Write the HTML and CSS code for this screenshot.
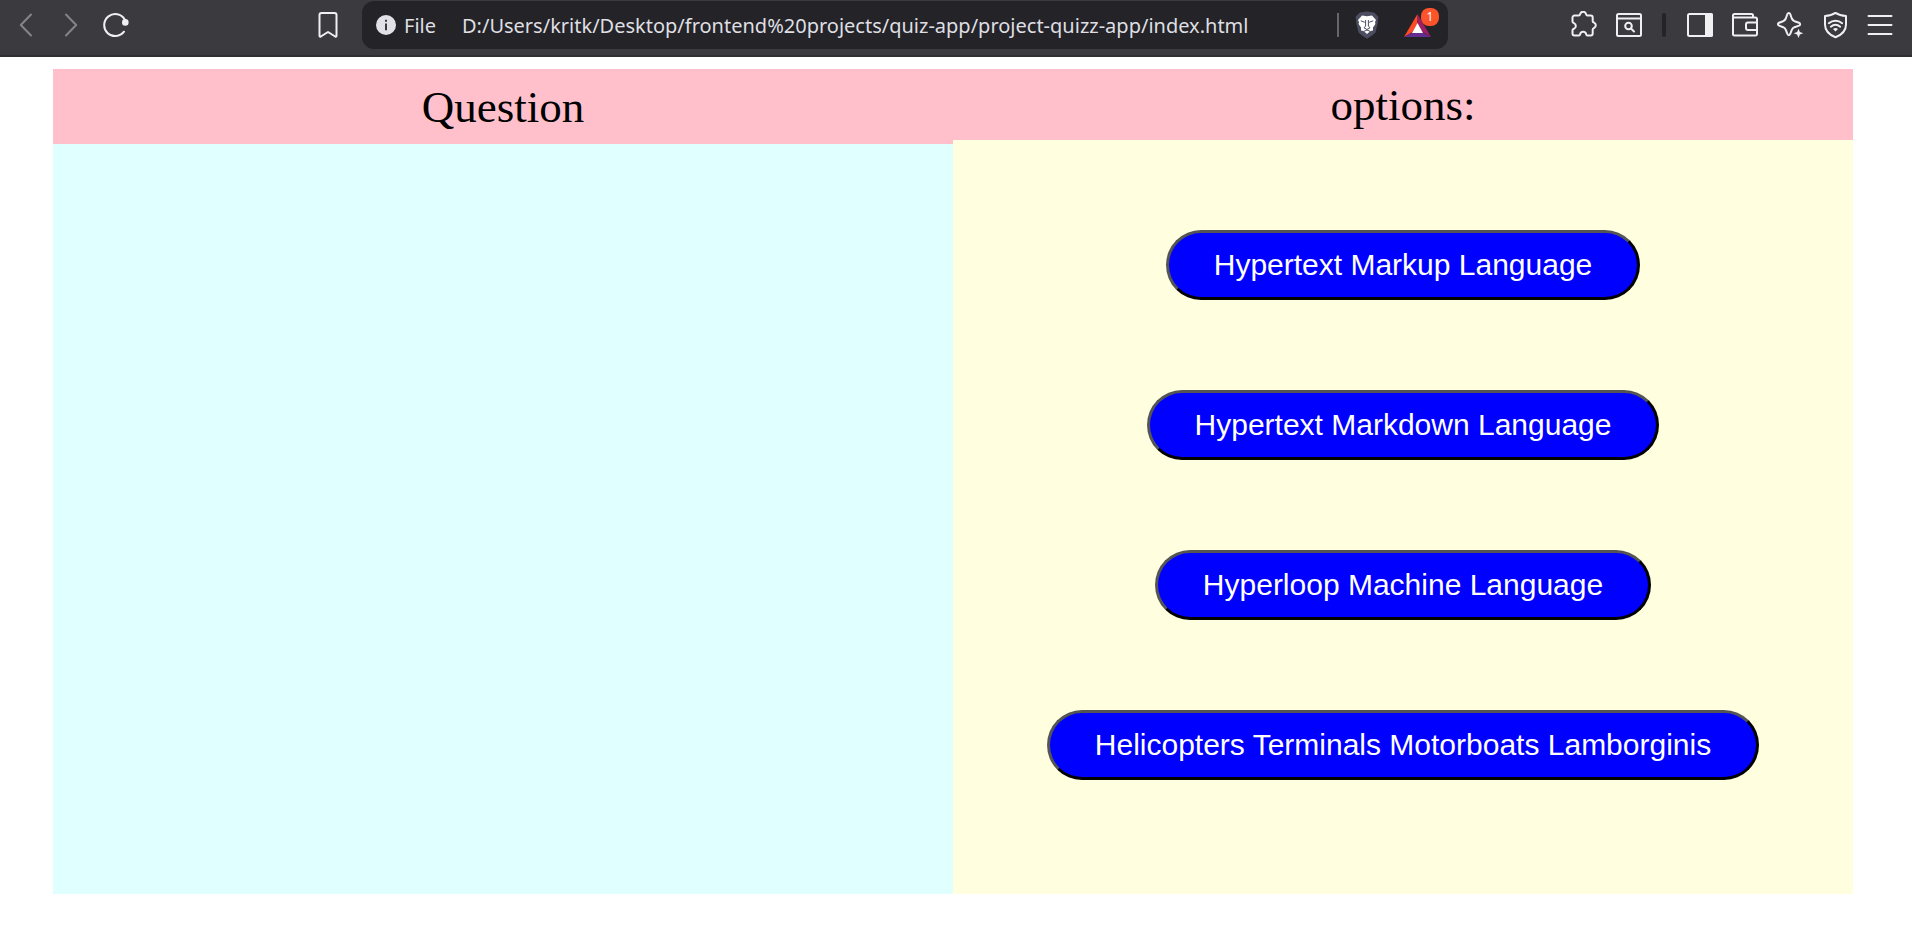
FILE: index.html
```html
<!DOCTYPE html>
<html lang="en">
<head>
<meta charset="utf-8">
<title>Quiz App</title>
<link rel="stylesheet" href="styles.css">
</head>
<body>
<header class="toolbar">
  <button class="tool tool-dim" type="button" aria-label="Back">
    <svg class="icon" viewBox="0 0 27 28"><path d="M18 3.500 7.800 14 18 24.500"/></svg>
  </button>
  <button class="tool tool-dim" type="button" aria-label="Forward">
    <svg class="icon" viewBox="0 0 27 28"><path d="M8 3.500 18.200 14 8 24.500"/></svg>
  </button>
  <button class="tool" type="button" aria-label="Reload">
    <svg class="icon" viewBox="0 0 27 28"><path d="M21.700 8.500A11 11 0 1 0 21 20.700"/><circle class="solid" cx="22.300" cy="11.400" r="3.300"/></svg>
  </button>
  <button class="tool tool-bookmark" type="button" aria-label="Bookmark">
    <svg class="icon" viewBox="0 0 27 28"><path d="M5.500 24.800V4a2 2 0 0 1 2-2h13a2 2 0 0 1 2 2v20.800c0 1-.7 1.200-1.300.7L14 21l-7.200 4.500c-.6.500-1.300.3-1.300-.7z"/></svg>
  </button>
  <div class="address">
    <button class="site" type="button">
      <svg class="site-icon" viewBox="0 0 20 20"><circle cx="10" cy="10" r="10" fill="#e2e1e8"/><path d="M9 4.800h2v2H9zM9 8.500h2v6.700H9z" fill="#3a3940"/></svg>
      <span>File</span>
    </button>
    <input class="url" type="text" aria-label="Address" spellcheck="false" value="D:/Users/kritk/Desktop/frontend%20projects/quiz-app/project-quizz-app/index.html">
    <span class="address-rule"></span>
    <button class="shield" type="button" aria-label="Shields">
      <svg class="shield-icon" viewBox="0 0 24 28"><path fill="#4c4d60" d="M5 1.500 12 .5l7 1 2 1.800L23.500 6l-.8 3 .3 2-2.500 10.500L17 24.500l-5 3.300-5-3.300-3.500-3L1 11l.3-2L.5 6 3 3.300z"/><path fill="#fff" d="M7 4.500 12 5.300l5-.8L21 9l-1 2 .4 2-2.400 3.500v3L15.500 20 12 23l-3.500-3-2.500-.5v-3L3.600 13l.4-2-1-2z"/><path fill="none" stroke="#4c4d60" d="m5.800 9.800 4 1.500M18.200 9.800l-4 1.500M10.600 9v6L9 16.800l3 1.700 3-1.700-1.600-1.800V9M9 20.300l3-1.300 3 1.300"/></svg>
    </button>
    <button class="rewards" type="button" aria-label="Rewards, 1 new">
      <svg class="rewards-icon" viewBox="0 0 27 23"><path fill="#ff4a25" d="M13.500 0v9.500L8.500 18 0 23z"/><path fill="#9e1f63" d="M13.500 0 27 23l-8.500-5-5-8.500z"/><path fill="#662d91" d="m0 23 8.500-4.500h10L27 23z"/><path fill="#fff" d="m13.500 9 5.500 10H8z"/></svg>
      <span class="badge">1</span>
    </button>
  </div>
  <button class="tool" type="button" aria-label="Extensions">
    <svg class="icon" viewBox="0 0 27 28"><path d="M3.500 4.500H7.800C8.800 4.500 9 3.700 9.200 3A3 3 0 0 1 15 3c.2.700.4 1.500 1.400 1.500h3.300a2 2 0 0 1 2 2v3.700c0 1 .8 1.200 1.400 1.400a3 3 0 0 1 0 5.400c-.6.300-1.400.5-1.400 1.500v4a2 2 0 0 1-2 2h-3.300c-1 0-1.100-.8-1.300-1.500a3.100 3.100 0 0 0-5.900 0c-.2.700-.3 1.500-1.300 1.500H3.500a2 2 0 0 1-2-2v-3.300c0-.8.600-1.200 1.400-1.500a3 3 0 0 0 0-5.600c-.8-.3-1.400-.7-1.400-1.500V6.500a2 2 0 0 1 2-2z"/></svg>
  </button>
  <button class="tool" type="button" aria-label="Search tabs">
    <svg class="icon" viewBox="0 0 27 28"><rect x="1" y="3" width="24" height="22" rx="1.500"/><path d="M1 7.500h24"/><circle cx="12.500" cy="15" r="3.300"/><path d="m15 17.500 3 3"/></svg>
  </button>
  <span class="toolbar-rule"></span>
  <button class="tool" type="button" aria-label="Sidebar">
    <svg class="icon" viewBox="0 0 27 28"><rect x="1" y="3" width="24" height="22" rx="1.500"/><path class="solid" d="M18 2h6a2 2 0 0 1 2 2v20a2 2 0 0 1-2 2h-6z"/></svg>
  </button>
  <button class="tool" type="button" aria-label="Wallet">
    <svg class="icon" viewBox="0 0 27 28"><path d="M21 6.500V4.500a1.500 1.500 0 0 0-1.500-1.500h-17A1.500 1.500 0 0 0 1 4.500V23a1.500 1.500 0 0 0 1.500 1.500h21A1.500 1.500 0 0 0 25 23V8a1.500 1.500 0 0 0-1.500-1.500H2.500M25 11.500h-9a2 2 0 0 0-2 2V17a2 2 0 0 0 2 2h9"/></svg>
  </button>
  <button class="tool" type="button" aria-label="Assistant">
    <svg class="icon" viewBox="0 0 27 28"><path d="M10.400 3c.6-1.500 2.200-1.500 2.800 0l1.600 4.500c.6 1.400 1.300 2.100 2.700 2.700l4.500 1.600c1.500.6 1.500 2.200 0 2.800l-4.500 1.600c-1.400.6-2.100 1.300-2.700 2.700L13.200 23c-.6 1.500-2.200 1.500-2.800 0l-1.600-4.100c-.6-1.400-1.300-2.100-2.700-2.700l-4-1.600c-1.500-.6-1.500-2.200 0-2.800l4-1.600c1.400-.6 2.100-1.300 2.700-2.700z"/><path class="solid" d="M21.500 17.800 22.900 21l3.400 1.300-3.400 1.300-1.400 3.300-1.400-3.300-3.400-1.300 3.400-1.300z"/></svg>
  </button>
  <button class="tool" type="button" aria-label="VPN">
    <svg class="icon" viewBox="0 0 27 28"><path d="M13.500 1.900c3 2 6.300 2.900 10.500 3v8.500c0 6-3.500 10-10.500 12.800C6.500 23.400 3 19.400 3 13.400V4.900c4.200-.1 7.500-1 10.500-3z"/><path d="M6.800 12.200c4-3.400 9.400-3.400 13.400 0M8.800 15.700c3-2.400 6.400-2.400 9.400 0"/><path class="solid" d="M11 18c1.600-1.300 3.400-1.300 5 0l-2.500 2.500z"/></svg>
  </button>
  <button class="tool" type="button" aria-label="Menu">
    <svg class="icon" viewBox="0 0 27 28"><path d="M1.500 5h23M1.500 14h23M1.500 23h23"/></svg>
  </button>
</header>
<main class="quiz">
  <section class="panel panel-question">
    <div class="heading heading-question">Question</div>
  </section>
  <section class="panel panel-options">
    <div class="heading heading-options">options:</div>
    <div class="options">
      <button class="option" type="button">Hypertext Markup Language</button>
      <button class="option" type="button">Hypertext Markdown Language</button>
      <button class="option" type="button">Hyperloop Machine Language</button>
      <button class="option" type="button">Helicopters Terminals Motorboats Lamborginis</button>
    </div>
  </section>
</main>
</body>
</html>
```
FILE: styles.css
```css
* {
  box-sizing: border-box;
}

body {
  margin: 0;
  background: #fff;
  color: #000;
  font-family: "Liberation Serif", "Times New Roman", serif;
}

.toolbar {
  display: flex;
  align-items: center;
  padding: 0 9px 5px 4px;
  background: #3b3a3f;
  border-bottom: 2px solid #302f33;
  font-family: "Noto Sans", "Open Sans", sans-serif;
}

.tool,
.site,
.shield,
.rewards {
  display: flex;
  align-items: center;
  justify-content: center;
  padding: 0;
  border: 0;
  background: none;
  color: #f0f0f3;
  font: inherit;
}

.tool {
  flex: none;
  width: 45px;
  height: 50px;
}

.tool-dim {
  color: #858489;
}

.tool-bookmark {
  margin: 0 12px 0 166px;
}

.icon {
  width: 27px;
  height: 28px;
  fill: none;
  stroke: currentColor;
  stroke-width: 2;
  stroke-linecap: round;
  stroke-linejoin: round;
}

.icon .solid {
  fill: currentColor;
  stroke: none;
}

.address {
  display: flex;
  flex: 1;
  align-items: center;
  min-width: 0;
  height: 48px;
  margin-right: 114px;
  padding: 0 17px 0 14px;
  border-radius: 12px;
  background: #242428;
}

.site {
  gap: 8px;
  color: #dfdfe3;
  font-size: 20px;
}

.site-icon {
  width: 20px;
  height: 20px;
}

.url {
  flex: 1;
  min-width: 0;
  height: 40px;
  margin-left: 26px;
  padding: 0;
  border: 0;
  outline: 0;
  background: none;
  color: #dfdfe3;
  font: inherit;
  font-size: 20px;
}

.address-rule {
  width: 2px;
  height: 24px;
  margin-right: 16px;
  background: #66656b;
}

.shield-icon {
  width: 24px;
  height: 28px;
}

.rewards {
  position: relative;
  margin-left: 25px;
}

.rewards-icon {
  width: 27px;
  height: 23px;
}

.badge {
  position: absolute;
  top: -6px;
  right: -8px;
  width: 18px;
  height: 18px;
  border-radius: 8px;
  background: #fb542b;
  color: #fff;
  font-size: 12px;
  line-height: 18px;
  text-align: center;
}

.toolbar-rule {
  flex: none;
  width: 4px;
  height: 24px;
  margin: 0 12px 0 10px;
  border-radius: 2px;
  background: #242428;
}

.quiz {
  display: flex;
  margin: 12px 59px 0 53px;
}

.panel {
  flex: 1;
}

.panel-question {
  min-height: 825px;
  background: #e0ffff;
}

.panel-options {
  background: #ffffe0;
}

.heading {
  background: #ffc0cb;
  font-size: 45px;
  line-height: 51px;
  text-align: center;
}

.heading-question {
  padding: 13px 12px 11px;
}

.heading-options {
  padding: 11px 12px 9px;
}

.options {
  display: flex;
  flex-direction: column;
  align-items: center;
  gap: 90px;
  padding: 90px 0;
}

.option {
  padding: 15px 45px;
  border: 3px outset #000;
  border-radius: 38px;
  background: #00f;
  color: #fff;
  font-family: "Liberation Sans", Arial, sans-serif;
  font-size: 30px;
  line-height: 34px;
}
```
